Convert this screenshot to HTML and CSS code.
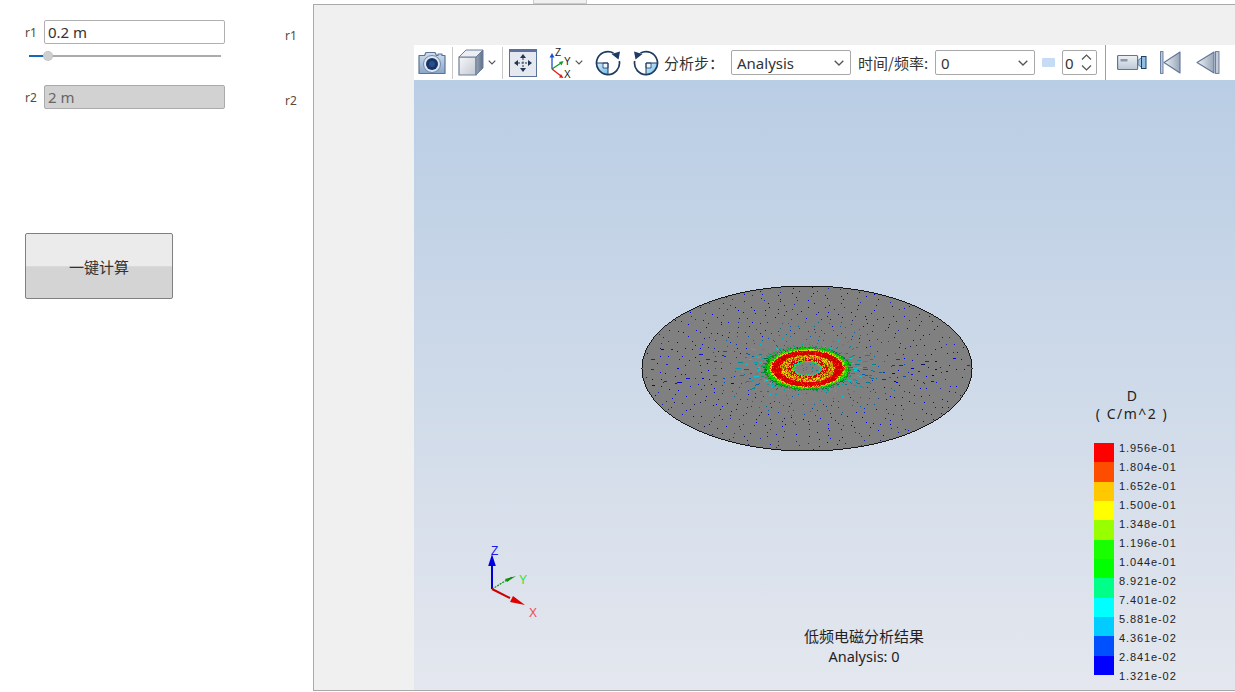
FILE: index.html
```html
<!DOCTYPE html>
<html lang="zh">
<head>
<meta charset="utf-8">
<title>低频电磁分析结果</title>
<link rel="stylesheet" href="styles.css">
</head>
<body>
<div class="app">
  <aside class="side">
    <div class="param-row">
      <div class="param">
        <div class="field">
          <label class="param-label">r1</label>
          <input class="text-input" type="text" value="0.2 m">
        </div>
        <div class="slider">
          <div class="slider-fill"></div>
          <div class="slider-track"></div>
          <div class="slider-thumb"></div>
        </div>
      </div>
      <span class="side-note">r1</span>
    </div>
    <div class="param-row">
      <div class="param">
        <div class="field">
          <label class="param-label">r2</label>
          <input class="text-input is-disabled" type="text" value="2 m" disabled>
        </div>
      </div>
      <span class="side-note">r2</span>
    </div>
    <button class="calc-button" type="button">一键计算</button>
  </aside>

  <main class="work">
    <div class="tab-strip"><div class="tab"></div></div>
    <section class="panel">
      <div class="panel-inner">
        <div class="toolbar">
          <svg class="ico ico-camera" viewBox="0 0 28 24" width="28" height="24">
            <defs><linearGradient id="cam" x1="0" y1="0" x2="0" y2="1"><stop offset="0" stop-color="#d2dfee"/><stop offset="1" stop-color="#8aa5c8"/></linearGradient></defs>
            <path d="M1 4.500h5.500l1.500-3h9l1.500 3h1.500v-1.500h4v1.500h3v18h-26z" fill="url(#cam)" stroke="#5a7497" stroke-width="1.200" stroke-linejoin="round"/>
            <circle cx="14" cy="13" r="8.500" fill="#dfe8f2" stroke="#6f89ab" stroke-width="1"/>
            <circle cx="14" cy="13" r="6" fill="#173468"/>
            <circle cx="14" cy="13" r="3" fill="#2a4d8c"/>
          </svg>
          <span class="sep sep-a"></span>
          <svg class="ico ico-cube" viewBox="0 0 26 27" width="26" height="27">
            <defs>
              <linearGradient id="cubeF" x1="0" y1="0" x2="1" y2="1"><stop offset="0" stop-color="#f6f7f9"/><stop offset="1" stop-color="#c3c9d2"/></linearGradient>
              <linearGradient id="cubeS" x1="0" y1="0" x2="1" y2="0"><stop offset="0" stop-color="#9aa5b5"/><stop offset="1" stop-color="#5f6f86"/></linearGradient>
            </defs>
            <path d="M1 8h17v18H1z" fill="url(#cubeF)" stroke="#6b7f9c" stroke-width="1.200"/>
            <path d="M18 8 25 1v18l-7 7z" fill="url(#cubeS)" stroke="#6b7f9c"/>
            <path d="M1 8h17L25 1H8z" fill="#eceef2" stroke="#6b7f9c"/>
          </svg>
          <svg class="chev chev-a" viewBox="0 0 8 5" width="8" height="5"><path d="M.7.7 4 4l3.300-3.300" fill="none" stroke="#555" stroke-width="1.200"/></svg>
          <span class="sep sep-b"></span>
          <svg class="ico ico-move" viewBox="0 0 28 28" width="28" height="28">
            <rect x=".5" y=".5" width="27" height="27" fill="#e5e8ef" stroke="#5a7299"/>
            <rect x="0" y="0" width="28" height="3" fill="#5a7299"/>
            <path d="M14 9v10M9 14h10" stroke="#1f3554" stroke-width="1" stroke-dasharray="2 1.500"/>
            <path d="M14 5l3 4h-6zM14 23l3-4h-6zM5 14l4-3v6zM23 14l-4-3v6z" fill="#1f3554"/>
          </svg>
          <svg class="ico ico-axes" viewBox="0 0 24 32" width="24" height="32">
            <path d="M4 22V9" stroke="#1f4fd0" stroke-width="1.300"/><path d="M4 6l2.500 4.500h-5z" fill="#1f4fd0"/>
            <path d="M4 22l9-6" stroke="#119e35" stroke-width="1.300"/><path d="M15.500 14l-2 4.500-2.500-3.500z" fill="#119e35"/>
            <path d="M4 22l9 7" stroke="#e01b1b" stroke-width="1.300"/><path d="M15.500 31l-4.500-.5 2-3.500z" fill="#e01b1b"/>
            <text x="7" y="9" class="axis-mini">Z</text>
            <text x="16" y="18" class="axis-mini">Y</text>
            <text x="16" y="31" class="axis-mini">X</text>
          </svg>
          <svg class="chev chev-b" viewBox="0 0 8 5" width="8" height="5"><path d="M.7.7 4 4l3.300-3.300" fill="none" stroke="#555" stroke-width="1.200"/></svg>
          <svg class="ico ico-rot-a" viewBox="0 0 26 26" width="26" height="26">
            <defs><linearGradient id="quad" x1="0" y1="0" x2="1" y2="1"><stop offset="0" stop-color="#d6ecf9"/><stop offset="1" stop-color="#6fbde8"/></linearGradient></defs>
            <path d="M13 13H1.500A11.500 11.500 0 0 0 13 24.500z" fill="url(#quad)"/>
            <path d="M8 13h5v5H8z" fill="#eaf5fc" stroke="#1e3b63" stroke-width=".8"/>
            <path d="M1.500 13H13V24.500" fill="none" stroke="#1e3b63" stroke-width="1"/>
            <path d="M18.500 3A11.500 11.500 0 1 0 24.300 11" fill="none" stroke="#1e3b63" stroke-width="1.700"/>
            <path d="M25 1.500 23.500 9.500 16.500 4z" fill="#1e3b63"/>
          </svg>
          <svg class="ico ico-rot-b" viewBox="0 0 26 26" width="26" height="26">
            <path d="M13 13H24.500A11.500 11.500 0 0 1 13 24.500z" fill="url(#quad)"/>
            <path d="M13 13h5v5H13z" fill="#eaf5fc" stroke="#1e3b63" stroke-width=".8"/>
            <path d="M24.500 13H13V24.500" fill="none" stroke="#1e3b63" stroke-width="1"/>
            <path d="M7.500 3A11.500 11.500 0 1 1 1.700 11" fill="none" stroke="#1e3b63" stroke-width="1.700"/>
            <path d="M1 1.500 2.500 9.500 9.500 4z" fill="#1e3b63"/>
          </svg>
          <span class="tool-label label-step">分析步：</span>
          <div class="select select-step"><span>Analysis</span><svg class="chev" viewBox="0 0 10 6" width="10" height="6"><path d="M.7.7 5 5 9.300.7" fill="none" stroke="#555" stroke-width="1.300"/></svg></div>
          <span class="tool-label label-time">时间/频率:</span>
          <div class="select select-time"><span>0</span><svg class="chev" viewBox="0 0 10 6" width="10" height="6"><path d="M.7.7 5 5 9.300.7" fill="none" stroke="#555" stroke-width="1.300"/></svg></div>
          <span class="mini-bar"></span>
          <div class="spin">
            <span>0</span>
            <svg class="spin-arrows" viewBox="0 0 11 17" width="11" height="17"><path d="M1 5.500 5.500 1 10 5.500M1 11.500 5.500 16 10 11.500" fill="none" stroke="#555" stroke-width="1.200"/></svg>
          </div>
          <span class="sep sep-c"></span>
          <svg class="ico ico-video" viewBox="0 0 30 17" width="30" height="17">
            <defs><linearGradient id="vid" x1="0" y1="0" x2="0" y2="1"><stop offset="0" stop-color="#eef1f5"/><stop offset="1" stop-color="#bcc7d6"/></linearGradient></defs>
            <rect x=".6" y="1.500" width="20" height="14" rx="1" fill="url(#vid)" stroke="#5d769b" stroke-width="1.200"/>
            <rect x="3.500" y="5" width="7" height="2.500" fill="#8a98ab"/>
            <path d="M21 6.500 24.500 3.500v10L21 10.500z" fill="#a5c6df" stroke="#5d769b"/>
            <rect x="24.500" y="2.500" width="4.500" height="12" fill="#8fc0de" stroke="#1f3f73"/>
          </svg>
          <svg class="ico ico-first" viewBox="0 0 22 23" width="22" height="23">
            <defs><linearGradient id="step" x1="0" y1="0" x2="1" y2="0"><stop offset="0" stop-color="#f0f2f5"/><stop offset="1" stop-color="#98a5b7"/></linearGradient></defs>
            <rect x="1.500" y=".6" width="2.500" height="21.800" fill="#c3cbd6" stroke="#5d769b" stroke-width=".9"/>
            <path d="M5 11.500 21 1v21z" fill="url(#step)" stroke="#5d769b" stroke-width="1.100" stroke-linejoin="round"/>
          </svg>
          <svg class="ico ico-prev" viewBox="0 0 24 23" width="24" height="23">
            <path d="M1 11.500 18 1v21z" fill="url(#step)" stroke="#5d769b" stroke-width="1.100" stroke-linejoin="round"/>
            <rect x="19.500" y=".6" width="3.500" height="21.800" fill="#c3cbd6" stroke="#5d769b" stroke-width=".9"/>
          </svg>
        </div>

        <div class="viewport">
          <canvas class="disc" id="disc" width="336" height="172"></canvas>

          <svg class="triad" viewBox="0 0 70 80" width="70" height="80">
            <g transform="translate(-12 -6)">
              <path d="M20 50V20" stroke="#0000d8" stroke-width="2"/>
              <path d="M20 15l3.800 12h-7.600z" fill="#0000e0"/>
              <path d="M20 50 40 38" stroke="#0d9a0d" stroke-width="1.200" stroke-dasharray="2 1"/>
              <path d="M44 37l-9 6-2-3z" fill="#0d8f0d"/>
              <path d="M20 50l18 9" stroke="#cc0000" stroke-width="2"/>
              <path d="M53 66l-15-3 3-6z" fill="#e00000"/>
              <text class="axis-z" x="19" y="16">Z</text>
              <text class="axis-y" x="47" y="45">Y</text>
              <text class="axis-x" x="57" y="78">X</text>
            </g>
          </svg>

          <div class="caption">
            <div>低频电磁分析结果</div>
            <div class="caption-sub">Analysis: 0</div>
          </div>

          <div class="legend">
            <div class="legend-title">D</div>
            <div class="legend-unit">( C/m^2 )</div>
            <div class="legend-body">
              <div class="legend-bar">
                <span class="c1"></span><span class="c2"></span><span class="c3"></span><span class="c4"></span>
                <span class="c5"></span><span class="c6"></span><span class="c7"></span><span class="c8"></span>
                <span class="c9"></span><span class="c10"></span><span class="c11"></span><span class="c12"></span>
              </div>
              <div class="legend-values">
                <span>1.956e-01</span><span>1.804e-01</span><span>1.652e-01</span><span>1.500e-01</span>
                <span>1.348e-01</span><span>1.196e-01</span><span>1.044e-01</span><span>8.921e-02</span>
                <span>7.401e-02</span><span>5.881e-02</span><span>4.361e-02</span><span>2.841e-02</span>
                <span>1.321e-02</span>
              </div>
            </div>
          </div>
        </div>
      </div>
    </section>
  </main>
</div>
<script src="script.js"></script>
</body>
</html>
```
FILE: styles.css
```css
* { box-sizing: border-box; }
html, body { margin: 0; height: 100%; overflow: hidden; background: #fff; }
body {
  font-family: "Noto Sans", "Noto Sans CJK SC", sans-serif;
  color: #333;
}
.app { display: flex; width: 1235px; height: 692px; }

/* left column */
.side { width: 313px; flex: none; padding: 20px 0 0 25px; display: flex; flex-direction: column; }
.param-row { display: flex; height: 65px; }
.param { width: 200px; flex: none; }
.field { display: flex; align-items: center; height: 24px; }
.param-label { width: 19px; flex: none; font-size: 12px; color: #5a4a3a; line-height: 26px; height: 24px; }
.text-input {
  width: 181px; height: 24px; padding: 0 3px; margin: 0;
  border: 1px solid #b0b0b0; border-radius: 2px; background: #fff;
  font: 15px "Noto Sans", sans-serif; color: #333; outline: none;
}
.text-input.is-disabled { background: #d2d2d2; color: #666; border-color: #aaa; opacity: 1; -webkit-text-fill-color: #666; }
.side-note { margin: 7px 0 0 60px; font-size: 12px; line-height: 18px; color: #5a4a3a; }
.slider { position: relative; height: 4px; width: 192px; margin: 10px 0 0 4px; display: flex; align-items: center; }
.slider-fill { width: 14px; height: 2px; background: #1468b8; flex: none; }
.slider-track { flex: 1; height: 2px; background: #ababab; }
.slider-thumb {
  position: absolute; left: 14px; top: -3px; width: 10px; height: 10px;
  border-radius: 50%; background: #cfcfcf; border: 1px dotted #b8b8b8;
}
.calc-button {
  width: 148px; height: 66px; margin-top: 83px; padding: 0;
  border: 1px solid #808080; border-radius: 2px;
  background: linear-gradient(to bottom, #ebebeb 0 50%, #d4d4d4 51% 100%);
  font: 15px "Noto Sans CJK SC", "Noto Sans", sans-serif; color: #333;
}

/* right column */
.work { flex: 1; min-width: 0; display: flex; flex-direction: column; }
.tab-strip { height: 4px; flex: none; padding-left: 220px; }
.tab { width: 54px; height: 4px; background: #f0f0f0; border: 1px solid #ccc; border-top: 0; }
.panel {
  height: 687px; flex: none; border: 1px solid #a9a9a9; border-right: 0;
  background: #f0f0f0; padding: 40px 0 0 100px; overflow: hidden;
}
.panel-inner { display: flex; flex-direction: column; height: 100%; }

/* toolbar */
.toolbar { height: 35px; flex: none; background: #fff; display: flex; align-items: center; font-size: 15px; color: #333; }
.ico { flex: none; display: block; }
.chev { flex: none; display: block; }
.sep { flex: none; width: 1px; height: 32px; background: #c8c8c8; }
.ico-camera { margin-left: 4px; }
.sep-a { margin-left: 6px; }
.ico-cube { margin-left: 5px; }
.chev-a { margin-left: 4px; }
.sep-b { margin-left: 6px; }
.ico-move { margin-left: 6px; }
.ico-axes { margin-left: 11px; }
.chev-b { margin-left: 3px; }
.ico-rot-a { margin-left: 12px; }
.ico-rot-b { margin-left: 12px; }
.tool-label { flex: none; white-space: nowrap; line-height: 20px; font-family: "Noto Sans CJK SC", "Noto Sans", sans-serif; }
.label-step { margin-left: 5px; width: 67px; }
.label-time { margin-left: 7px; width: 70px; }
.select {
  flex: none; height: 25px; display: flex; align-items: center; justify-content: space-between;
  padding: 0 6px 0 5px; border: 1px solid #a8a8a8; border-radius: 2px; background: #fff;
  font-size: 15px;
}
.select-step { width: 120px; }
.select-time { width: 100px; margin-left: 7px; }
.mini-bar { flex: none; width: 13px; height: 9px; margin-left: 7px; background: #c6dcf6; border-radius: 1px; }
.spin {
  flex: none; width: 35px; height: 25px; margin-left: 7px; padding: 0 4px 0 2px;
  display: flex; align-items: center; justify-content: space-between;
  border: 1px solid #a8a8a8; border-radius: 2px; font-size: 15px;
}
.sep-c { margin-left: 8px; background: #a0a0a0; height: 35px; }
.ico-video { margin-left: 11px; }
.ico-first { margin-left: 12px; }
.ico-prev { margin-left: 15px; }
.axis-mini { font: 10px "Liberation Sans", sans-serif; fill: #222; }

/* 3D view */
.viewport {
  position: relative; flex: 1; min-height: 0;
  background: linear-gradient(to bottom, #b9cde4 0%, #e4e7ee 100%);
  overflow: hidden;
}
.disc { position: absolute; left: 226px; top: 204px; }
.triad { position: absolute; left: 70px; top: 465px; overflow: visible; }
.axis-z, .axis-y, .axis-x { font: 12px "Liberation Sans", sans-serif; }
.axis-z { fill: #1a1ae6; }
.axis-y { fill: #33e033; }
.axis-x { fill: #f04a4a; }
.caption {
  position: absolute; left: 350px; top: 546px; width: 200px; text-align: center;
  font-size: 15px; line-height: 20px; color: #222;
}
.caption-sub { font-size: 14.500px; }
.legend { position: absolute; left: 660px; top: 307px; width: 110px; color: #222; }
.legend-title, .legend-unit { width: 116px; text-align: center; font-size: 14px; line-height: 18px; letter-spacing: .5px; }
.legend-unit { letter-spacing: 1.500px; margin-bottom: 20px; }
.legend-body { display: flex; margin-left: 20px; align-items: flex-start; }
.legend-bar { width: 20px; height: 232px; flex: none; display: flex; flex-direction: column; }
.legend-bar span { flex: 1; }
.legend-values { display: flex; flex-direction: column; margin: -4px 0 0 5px; font: 11px/19px "Liberation Sans", sans-serif; letter-spacing: .9px; white-space: nowrap; }
.c1 { background: #ff0000; }
.c2 { background: #ff4d00; }
.c3 { background: #ffc800; }
.c4 { background: #ffff00; }
.c5 { background: #99ff00; }
.c6 { background: #19ff00; }
.c7 { background: #00ff00; }
.c8 { background: #00ff88; }
.c9 { background: #00ffff; }
.c10 { background: #00ccff; }
.c11 { background: #0050ff; }
.c12 { background: #0000ff; }
```
FILE: script.js
```js
(function () {
  var canvas = document.getElementById('disc');
  var ctx = canvas.getContext('2d');
  var cx = 166.5, cy = 84, rx = 165.5, ry = 83;
  var seed = 12345;
  function rnd() {
    seed = (seed * 1664525 + 1013904223) >>> 0;
    return seed / 4294967296;
  }
  function px(x, y, c) {
    ctx.fillStyle = c;
    ctx.fillRect(Math.round(x), Math.round(y), 1, 1);
  }
  function norm(x, y) {
    var a = (x - cx) / rx, b = (y - cy) / ry;
    return Math.sqrt(a * a + b * b);
  }
  for (var y = 0; y < canvas.height; y++) {
    for (var x = 0; x < canvas.width; x++) {
      if (norm(x, y) > 1) continue;
      var edge = norm(x - 1, y) > 1 || norm(x + 1, y) > 1 || norm(x, y - 1) > 1 || norm(x, y + 1) > 1;
      px(x, y, edge ? '#151515' : '#808080');
    }
  }
  function pick(list) { return list[Math.floor(rnd() * list.length)]; }
  function tick(r, a, len, c) {
    var dx = Math.cos(a), dy = Math.sin(a);
    var x0 = cx + dx * r * rx, y0 = cy + dy * r * ry;
    var vx = dx * rx, vy = dy * ry, m = Math.sqrt(vx * vx + vy * vy);
    vx /= m; vy /= m;
    for (var i = 0; i < len; i++) {
      var X = x0 + vx * i, Y = y0 + vy * i;
      if (norm(X, Y) < 0.985) px(X, Y, c);
    }
  }
  // sparse arrows over the outer part of the disc
  for (var r = 0.98; r > 0.28; r -= 0.042) {
    var n = Math.round(34 + r * 26);
    var off = rnd() * 6;
    for (var k = 0; k < n; k++) {
      if (rnd() < 0.12) continue;
      var a = (k + off + rnd() * 0.6) / n * Math.PI * 2;
      var rr = r + (rnd() - 0.5) * 0.024;
      var side = Math.abs(Math.cos(a));
      var c, len = 1;
      if (rr > 0.6) {
        c = pick(['#0000e6', '#0000c8', '#0a10d8', '#1426b4', '#101060']);
        if (side > 0.96 && rnd() < 0.35) len = 2 + Math.floor(rnd() * 3);
      } else if (rr > 0.42) {
        c = pick(['#0030c8', '#0050c0', '#0000d0', '#006a9a', '#104080']);
        if (side > 0.92 && rnd() < 0.4) len = 2 + Math.floor(rnd() * 3);
      } else {
        c = pick(['#00a0b4', '#008a90', '#00c4d8', '#007a9a', '#0060b0']);
        if (side > 0.8) len = 2 + Math.floor(rnd() * 5);
        else if (side > 0.5) len = 2;
      }
      tick(rr, a, len, c);
    }
  }
  // thin rays around the hot ring
  for (var j = 0; j < 90; j++) {
    var b = j / 90 * Math.PI * 2 + rnd() * 0.03;
    var sd = Math.abs(Math.cos(b));
    if (rnd() < 0.7) tick(0.27 + rnd() * 0.02, b, 1 + Math.round(sd * 4 * rnd()), pick(['#00c8c0', '#00a8a0', '#009880', '#00d0d8']));
    tick(0.24 + rnd() * 0.015, b + 0.01, 2 + Math.round(sd * 4 * rnd()), pick(['#008a40', '#00a050', '#10b030', '#006a50']));
  }
  // hot ring, painted pixel by pixel
  for (var py = cy - 24; py <= cy + 24; py++) {
    for (var qx = cx - 48; qx <= cx + 48; qx++) {
      var d = norm(qx, py) + (rnd() - 0.5) * 0.01;
      var col = null;
      var t = rnd();
      if (d < 0.075) {
        if (t < 0.05) col = '#008a90';
      } else if (d < 0.09) {
        col = t < 0.45 ? '#20c870' : (t < 0.75 ? '#60d020' : '#00c8b8');
      } else if (d < 0.12) {
        col = t < 0.6 ? '#d80000' : (t < 0.8 ? '#d8c000' : '#a8a800');
      } else if (d < 0.165) {
        col = t < 0.42 ? '#c8a800' : (t < 0.6 ? '#e8e000' : (t < 0.78 ? '#a88000' : '#d81800'));
      } else if (d < 0.215) {
        col = t < 0.6 ? '#e00000' : (t < 0.88 ? '#c00000' : '#f83000');
      } else if (d < 0.228) {
        col = t < 0.45 ? '#d8d800' : (t < 0.75 ? '#98d800' : '#d83000');
      } else if (d < 0.245) {
        col = t < 0.7 ? '#10c800' : '#70d000';
      } else if (d < 0.262) {
        if (t < 0.55) col = t < 0.3 ? '#009800' : '#00b820';
      }
      if (col) px(qx, py, col);
    }
  }
})();
```
